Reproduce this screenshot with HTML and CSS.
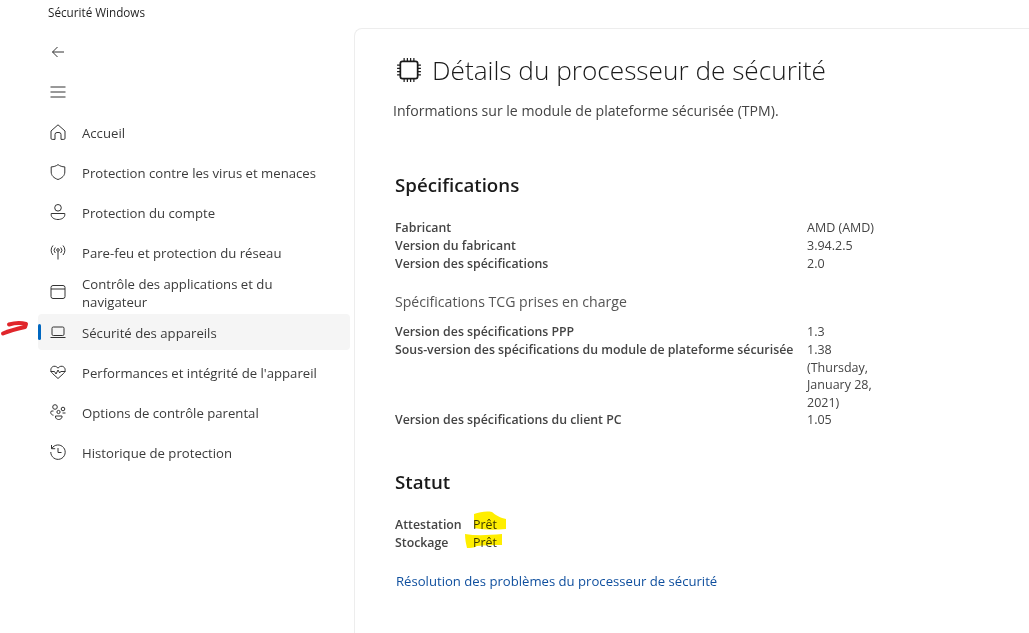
FILE: index.html
```html
<!DOCTYPE html>
<html lang="fr">
<head>
<meta charset="utf-8">
<title>Sécurité Windows</title>
<link rel="stylesheet" href="styles.css">
</head>
<body>
<header class="titlebar">Sécurité Windows</header>
<div class="app">
  <nav class="sidebar">
    <div class="tool">
      <svg class="ico" viewBox="0 0 16 16"><path d="M14 8H2.500M7.500 3 2.500 8l5 5"/></svg>
    </div>
    <div class="tool">
      <svg class="ico" viewBox="0 0 16 16"><path d="M.5 3h15M.5 8h15M.5 13h15"/></svg>
    </div>
    <ul class="menu">
      <li class="item"><svg class="ico" viewBox="0 0 16 16"><path d="M1 7 8 .8 15 7v7.200a1.200 1.200 0 0 1-1.200 1.200H11V10.500a2 2 0 0 0-2-2H7a2 2 0 0 0-2 2v4.900H2.200A1.200 1.200 0 0 1 1 14.200Z"/></svg><span>Accueil</span></li>
      <li class="item"><svg class="ico" viewBox="0 0 16 16"><path d="M8 .6c2 1.500 4.200 2.200 6.800 2.300V8c0 3.500-2.500 6-6.800 7.500C3.700 14 1.200 11.500 1.200 8V2.900C3.800 2.800 6 2.100 8 .6Z"/></svg><span>Protection contre les virus et menaces</span></li>
      <li class="item"><svg class="ico" viewBox="0 0 16 16"><circle cx="8" cy="3.800" r="3.300"/><path d="M1.200 9.500h13.600v1.300c0 2.700-3 4.700-6.800 4.700s-6.800-2-6.800-4.700Z"/></svg><span>Protection du compte</span></li>
      <li class="item"><svg class="ico" viewBox="0 0 16 16"><circle cx="8" cy="6" r="1.300"/><path d="M8 7.500v8M5.300 3.500a4 4 0 0 0 0 5.500M10.700 3.500a4 4 0 0 1 0 5.500M3 1.500a7 7 0 0 0 0 9.500M13 1.500a7 7 0 0 1 0 9.500"/></svg><span>Pare-feu et protection du réseau</span></li>
      <li class="item"><svg class="ico" viewBox="0 0 16 16"><rect x="1" y="1.500" width="14" height="13" rx="2"/><path d="M1 5h14"/></svg><span class="wrapped">Contrôle des applications et du navigateur</span></li>
      <li class="item active"><svg class="ico" viewBox="0 0 16 16"><rect x="2" y="3" width="12" height="8.500" rx="1.300"/><path d="M.5 13.500h15"/></svg><span>Sécurité des appareils</span></li>
      <li class="item"><svg class="ico" viewBox="0 0 16 16"><path d="M8 14.500 2.500 9.500C.200 7.200.500 4.300 2.200 3c1.900-1.500 4.300-.8 5.800 1.200C9.500 2.200 11.900 1.500 13.800 3c1.700 1.300 2 4.200-.3 6.500Z"/><path d="M.5 7.500h4l1.500 2.500 2-4 1.700 3 1-1.500h4.800"/></svg><span>Performances et intégrité de l'appareil</span></li>
      <li class="item"><svg class="ico" viewBox="0 0 16 16"><circle cx="5" cy="3" r="2.300"/><circle cx="13" cy="5" r="1.800"/><circle cx="8.500" cy="8" r="1.600"/><path d="M3.500 7H2a1.300 1.300 0 0 0-1.300 1.300c0 1.500 1 2.700 2.800 2.900M15.500 9h-3M5.500 12h6.500v1c0 1.500-1.800 2.500-3.300 2.500S5.500 14.500 5.500 13Z"/></svg><span>Options de contrôle parental</span></li>
      <li class="item"><svg class="ico" viewBox="0 0 16 16"><path d="M1.800 4.500A7.200 7.200 0 1 1 .800 8M1.500 1v3.700h3.700M8 4v4.500h3.500"/></svg><span>Historique de protection</span></li>
    </ul>
  </nav>
  <main class="panel">
    <h1 class="title">
      <svg class="chip" viewBox="0 0 24 24"><rect x="4" y="4" width="16" height="16" rx="2"/><path class="pins" d="M7.500 1v3M10.500 1v3M13.500 1v3M16.500 1v3M7.500 20v3M10.500 20v3M13.500 20v3M16.500 20v3M1 7.500h3M1 10.500h3M1 13.500h3M1 16.500h3M20 7.500h3M20 10.500h3M20 13.500h3M20 16.500h3"/></svg>
      Détails du processeur de sécurité
    </h1>
    <p class="subtitle">Informations sur le module de plateforme sécurisée (TPM).</p>

    <h2 class="section first">Spécifications</h2>
    <dl class="specs">
      <dt>Fabricant</dt><dd>AMD (AMD)</dd>
      <dt>Version du fabricant</dt><dd>3.94.2.5</dd>
      <dt>Version des spécifications</dt><dd>2.0</dd>
    </dl>
    <h3 class="subsection">Spécifications TCG prises en charge</h3>
    <dl class="specs">
      <dt>Version des spécifications PPP</dt><dd>1.3</dd>
      <dt>Sous-version des spécifications du module de plateforme sécurisée</dt><dd>1.38 (Thursday, January 28, 2021)</dd>
      <dt>Version des spécifications du client PC</dt><dd>1.05</dd>
    </dl>

    <h2 class="section">Statut</h2>
    <dl class="status">
      <dt>Attestation</dt><dd>Prêt</dd>
      <dt>Stockage</dt><dd>Prêt</dd>
    </dl>
    <a class="link" href="#">Résolution des problèmes du processeur de sécurité</a>
  </main>
</div>
<svg class="annot" viewBox="0 0 1029 633" width="1029" height="633">
  <path class="red" d="M3 333.500C10 330.500 18 328.500 25 327L26 324C21 322.500 14 323 9 324.500"/>
  <path class="yellow" d="M474 514c6-2 12-3 18-2 3 3 9 6 14 7v10c-11 1-22 1-32-1Z"/>
  <path class="yellow" d="M465 534c12 2 24 1 37 0v11c-8 0-17 0-25 1-3 2-7 2-10 2-1-4-2-9-2-14Z"/>
</svg>
</body>
</html>
```
FILE: styles.css
```css
* { box-sizing: border-box; }
html, body { margin: 0; height: 100%; overflow: hidden; }
body {
  width: 1029px;
  height: 633px;
  position: relative;
  background: #fff;
  color: #3b3b3b;
  font-family: "Open Sans", "Noto Sans", sans-serif;
  font-size: 13px;
}
.titlebar {
  height: 28px;
  padding: 5px 0 0 48px;
  font-size: 11.7px;
  line-height: 15px;
  color: #1f1f1f;
}
.app { display: flex; height: 605px; }
.sidebar { width: 354px; flex: none; padding: 4px 4px 0 38px; }
.tool { height: 40px; display: flex; align-items: center; padding-left: 12px; }
.ico {
  width: 16px;
  height: 16px;
  flex: none;
  fill: none;
  stroke: #333;
  stroke-width: 1;
}
.menu { list-style: none; margin: 0; padding: 0; }
.item {
  height: 40px;
  display: flex;
  align-items: center;
  gap: 16px;
  padding: 0 8px 0 12px;
  font-size: 13.17px;
  line-height: 18px;
  border-radius: 4px;
  position: relative;
}
.item span { position: relative; top: 1px; }
.item .wrapped { max-width: 240px; }
.item.active { background: #f5f5f5; height: 36px; margin: 2px 0; }
.item.active::before {
  content: "";
  position: absolute;
  left: 0;
  top: 10px;
  width: 3px;
  height: 16px;
  border-radius: 2px;
  background: #0067c0;
}
.panel {
  flex: 1;
  padding: 21px 40px 0 39px;
  border-left: 1px solid #ededed;
  border-top: 1px solid #ededed;
  border-top-left-radius: 8px;
}
.title {
  margin: 0;
  display: flex;
  align-items: center;
  gap: 10px;
  font-size: 26.2px;
  font-weight: 300;
  line-height: 40px;
  color: #1a1a1a;
}
.chip { width: 26px; height: 26px; margin-left: 2px; fill: none; stroke: #1a1a1a; stroke-width: 1.600; }
.chip .pins { stroke-width: 1.100; }
.subtitle { margin: 11px 0 0 -1px; font-size: 14.1px; line-height: 20px; color: #444; }
.section { margin: 0; font-size: 18.7px; font-weight: 600; line-height: 24px; color: #1a1a1a; padding-left: 1px; margin-top: 41px; }
.section.first { margin-top: 52px; }
.specs {
  margin: 22px 0 0;
  display: grid;
  grid-template-columns: 412px 72px;
  font-size: 12.33px;
  line-height: 18px;
  padding-left: 1px;
}
.specs dt, .status dt { margin: 0; font-weight: 600; color: #444; }
.specs dd { margin: 0; color: #444; line-height: 17.5px; font-size: 12.5px; }
.subsection { margin: 19px 0 0; padding-left: 1px; font-size: 14.1px; font-weight: 400; line-height: 20px; color: #555; }
.subsection + .specs { margin-top: 11px; }
.status {
  margin: 22px 0 0;
  padding-left: 1px;
  display: grid;
  grid-template-columns: 78px 60px;
  font-size: 12.33px;
  line-height: 18px;
}
.status dd { margin: 0; }
.link { display: block; margin: 20px 0 0 2px; font-size: 13.13px; line-height: 18px; color: #0f4f9e; text-decoration: none; }
.annot { position: absolute; inset: 0; pointer-events: none; }
.annot .red { fill: none; stroke: #e0262b; stroke-width: 4; stroke-linecap: round; stroke-linejoin: round; }
.annot .yellow { fill: #ffee00; mix-blend-mode: multiply; }
```
